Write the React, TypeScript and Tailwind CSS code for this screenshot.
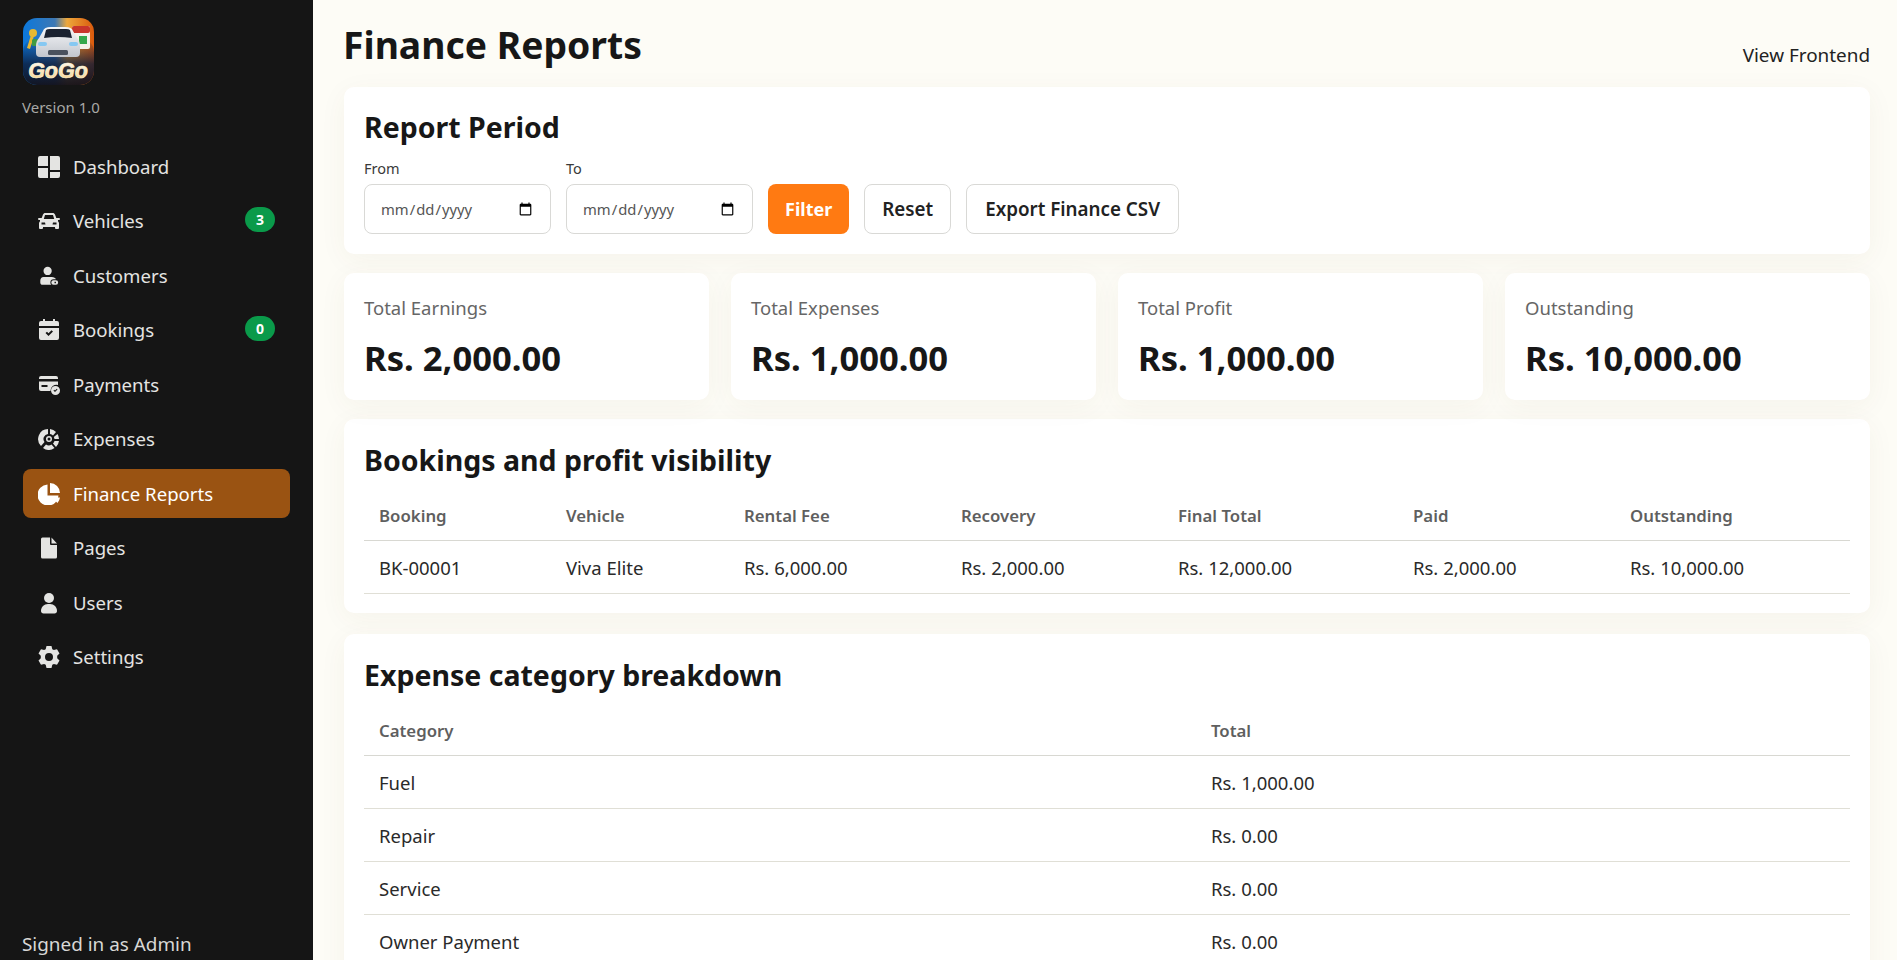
import React from "react";

const fontCls = "font-['Noto_Sans','Open_Sans',sans-serif]";

function Logo() {
  return (
    <svg width="72" height="68" viewBox="0 0 72 68" className="block">
      <defs>
        <linearGradient id="lg" x1="0" y1="0" x2="1" y2="0">
          <stop offset="0" stopColor="#0b78dc" />
          <stop offset="0.45" stopColor="#3d78b4" />
          <stop offset="0.62" stopColor="#eda83c" />
          <stop offset="1" stopColor="#d9590c" />
        </linearGradient>
        <linearGradient id="lb" x1="0" y1="0" x2="0" y2="1">
          <stop offset="0" stopColor="#0a1f4a" stopOpacity="0" />
          <stop offset="0.55" stopColor="#0b1a38" stopOpacity="0.8" />
          <stop offset="1" stopColor="#12101a" stopOpacity="0.95" />
        </linearGradient>
        <linearGradient id="lt" x1="0" y1="0" x2="0" y2="1">
          <stop offset="0" stopColor="#ffffff" />
          <stop offset="1" stopColor="#f6cf7c" />
        </linearGradient>
        <linearGradient id="lc" x1="0" y1="0" x2="0" y2="1">
          <stop offset="0" stopColor="#f6f7f9" />
          <stop offset="1" stopColor="#c2c6cd" />
        </linearGradient>
      </defs>
      <rect x="0" y="0" width="71" height="67" rx="14" fill="url(#lg)" />
      <rect x="0" y="20" width="71" height="47" rx="14" fill="url(#lb)" />
      <rect x="49" y="8" width="18" height="23" rx="2" fill="#f4f1ea" />
      <rect x="49" y="8" width="18" height="7" rx="2" fill="#c9352b" />
      <rect x="56" y="18" width="8" height="8" fill="#35a84c" />
      <circle cx="10" cy="15" r="4" fill="#e8b931" />
      <path d="M8 17 L4 30 L7 31 L11 18 Z" fill="#e8b931" />
      <rect x="9" y="21" width="6" height="7" rx="1.500" fill="#3f9b43" />
      <path d="M20 13 Q21 9 28 9 H42 Q49 9 50 13 L54 20 Q57 23 57 28 V35 Q57 39 53 39 H17 Q13 39 13 35 V28 Q13 23 16 20 Z" fill="url(#lc)" />
      <path d="M21 20 L23 12 Q24 11 27 11 H43 Q46 11 47 12 L49 20 Q35 18 21 20 Z" fill="#1a2230" />
      <rect x="15" y="24" width="9" height="4" rx="2" fill="#86c8f2" />
      <rect x="46" y="24" width="9" height="4" rx="2" fill="#86c8f2" />
      <rect x="25" y="32" width="20" height="5" rx="1.500" fill="#4a525e" />
      <text x="35" y="60" textAnchor="middle" fontFamily="'Liberation Sans',sans-serif" fontWeight="700" fontStyle="italic" fontSize="21.500" fill="url(#lt)" stroke="#fff3d6" strokeWidth="0.7">GoGo</text>
    </svg>
  );
}

const ic = "w-[22px] h-[22px] shrink-0";
const Dash = () => (
  <svg viewBox="0 0 22 22" className={ic} fill="currentColor"><path d="M0 2a2 2 0 0 1 2-2h8v10H0zM12 0h8a2 2 0 0 1 2 2v12H12zM12 16h10v4a2 2 0 0 1-2 2h-8zM0 12h10v10H2a2 2 0 0 1-2-2z" /></svg>
);
const Car = () => (
  <svg viewBox="0 0 22 22" className={ic} fill="currentColor"><path fillRule="evenodd" d="M5 4.500C5.400 3.600 6.200 3 7.200 3h7.600c1 0 1.800.6 2.200 1.500L18.300 8H21a1 1 0 0 1 0 2h-1v1.200c.6.5 1 1.200 1 2V18a1 1 0 0 1-1 1h-2a1 1 0 0 1-1-1v-1H5v1a1 1 0 0 1-1 1H2a1 1 0 0 1-1-1v-4.800c0-.8.4-1.500 1-2V10H1a1 1 0 0 1 0-2h2.700zM7 5l-1.200 4h10.400L15 5zM3.500 12.500v2h4l-.5-2zm15 0H15l-.5 2h4z" /></svg>
);
const Customer = () => (
  <svg viewBox="0 -1 24 24" className={ic} fill="currentColor"><path fillRule="evenodd" d="M10.500 1a4.500 4.500 0 1 1 0 9 4.500 4.500 0 0 1 0-9zM6 12h9c2.500 0 4 1 4.500 2.500H17a3.500 3.500 0 0 0-3.500 3.500c0 1 .4 2 1 2.500H5c-1.500 0-2.500-1-2.500-2.500V16c0-2.500 1.500-4 3.500-4zM17 15.500h2.500a2.500 2.500 0 0 1 0 5H17a2.500 2.500 0 0 1 0-5zm1 1.700v1.600h1.600v-1.600z" /></svg>
);
const Cal = () => (
  <svg viewBox="0 0 22 22" className={ic} fill="currentColor"><path fillRule="evenodd" d="M5 0h2v2h8V0h2v2h2a2 2 0 0 1 2 2v3H1V4a2 2 0 0 1 2-2h2zM1 9h20v10a2 2 0 0 1-2 2H3a2 2 0 0 1-2-2zm6.500 5L9 12.800l1.500 1.500 3-3L15 12.500 10.500 17z" /></svg>
);
const Pay = () => (
  <svg viewBox="0 0 22 22" className={ic} fill="currentColor"><path fillRule="evenodd" d="M3 2h15a2 2 0 0 1 2 2v1H1V4a2 2 0 0 1 2-2zM1 7.500h19V11a6 6 0 0 0-7.500 6H3a2 2 0 0 1-2-2zM3.500 11v2h6v-2zM17.500 12a4.500 4.500 0 1 1 0 9 4.500 4.500 0 0 1 0-9zm-2 4.500 1.500 1.500 2.500-2.500-.7-.7-1.800 1.800-.8-.8z" /></svg>
);
const Exp = () => (
  <svg viewBox="0 0 22 22" className={ic} fill="currentColor"><path fillRule="evenodd" d="M10 1v5a5 5 0 0 0-3.500 8L3 18A10 10 0 0 1 10 1zM12 1a10 10 0 0 1 6 3l-3 3.500A5 5 0 0 0 12 6zM19.500 6a10 10 0 0 1 1.500 5h-4.500a5 5 0 0 0-.7-2zM21 13a10 10 0 0 1-3 6l-3-3.500a5 5 0 0 0 1.500-2.500zM16.500 20a10 10 0 0 1-11.500 0l3-3.500a5 5 0 0 0 5.500 0zM11 8a3 3 0 1 1 0 6 3 3 0 0 1 0-6zm0 1.500a1.500 1.500 0 1 0 0 3 1.500 1.500 0 0 0 0-3z" /></svg>
);
const Pie = () => (
  <svg viewBox="0 0 22 22" className={ic} fill="currentColor"><path d="M9.500 1.500v11h11A10.500 10.500 0 1 1 9.500 1.500zM12 0a10 10 0 0 1 10 10H12zM13.500 14.500H22a10 10 0 0 1-2.500 5.500z" /></svg>
);
const Doc = () => (
  <svg viewBox="0 0 22 22" className={ic} fill="currentColor"><path d="M3 2a1.500 1.500 0 0 1 1.500-1.500H12V7a1 1 0 0 0 1 1h6v12a1.500 1.500 0 0 1-1.500 1.500h-13A1.500 1.500 0 0 1 3 20zM13.500.5 19 6.500h-5.500z" /></svg>
);
const User = () => (
  <svg viewBox="0 0 22 22" className={ic} fill="currentColor"><circle cx="11" cy="6" r="5" /><path d="M3 19c0-4 3-7 7-7h2c4 0 7 3 7 7 0 1.500-1 2.500-2.500 2.500h-11C4 21.500 3 20.500 3 19z" /></svg>
);
const Gear = () => (
  <svg viewBox="0 0 22 22" className={ic} fill="currentColor"><path fillRule="evenodd" d="M8.500 0h5l.8 3.200 1.600.9 3.100-.9L21.500 7.500l-2.300 2.300v2.400l2.300 2.300-2.500 4.300-3.100-.9-1.600.9-.8 3.200h-5l-.8-3.200-1.600-.9-3.100.9L.5 14.500l2.300-2.300V9.800L.5 7.500 3 3.200l3.100.9 1.600-.9zM11 7a4 4 0 1 0 0 8 4 4 0 0 0 0-8z" /></svg>
);

const nav: { label: string; icon: React.ReactNode; badge?: string; active?: boolean }[] = [
  { label: "Dashboard", icon: <Dash /> },
  { label: "Vehicles", icon: <Car />, badge: "3" },
  { label: "Customers", icon: <Customer /> },
  { label: "Bookings", icon: <Cal />, badge: "0" },
  { label: "Payments", icon: <Pay /> },
  { label: "Expenses", icon: <Exp /> },
  { label: "Finance Reports", icon: <Pie />, active: true },
  { label: "Pages", icon: <Doc /> },
  { label: "Users", icon: <User /> },
  { label: "Settings", icon: <Gear /> },
];

function Sidebar() {
  return (
    <aside className="w-[313px] shrink-0 h-full bg-[#151515] flex flex-col px-[23px] pt-[18px] pb-[4px] text-[#e4e4e2]">
      <Logo />
      <div className="text-[15px] leading-[20px] text-[#a9a9a6] mt-[11px] -ml-[1px]">Version 1.0</div>
      <nav className="mt-[25px] flex flex-col gap-[5.5px]">
        {nav.map((n) => (
          <div
            key={n.label}
            className={
              n.active
                ? "h-[49px] rounded-[8px] bg-[#9a5312] text-white flex items-center pl-[15px] pr-[15px] gap-[13px] text-[18.6px]"
                : "h-[49px] rounded-[8px] flex items-center pl-[15px] pr-[15px] gap-[13px] text-[18.6px]"
            }
          >
            {n.icon}
            <span className="flex-1">{n.label}</span>
            {n.badge && (
              <span className="w-[30px] h-[25px] -mt-[4px] rounded-full bg-[#0a9a4a] text-white text-[14px] font-bold flex items-center justify-center">
                {n.badge}
              </span>
            )}
          </div>
        ))}
      </nav>
      <div className="mt-auto text-[18.9px] leading-[24px] text-[#d8d8d6] -ml-[1px]">Signed in as Admin</div>
    </aside>
  );
}

const cardCls = "bg-white rounded-[10px] shadow-[0_6px_28px_rgba(90,80,40,0.05)]";

function DateField({ label }: { label: string }) {
  return (
    <label className="flex flex-col w-[187px]">
      <span className="text-[14.5px] leading-[20px] text-[#3a3a3a] mb-[6px]">{label}</span>
      <input
        type="date"
        className="h-[50px] w-full rounded-[8px] border border-[#d9d9d6] bg-white px-[15px] text-[14.8px] text-[#555]"
      />
    </label>
  );
}

function Stat({ label, value }: { label: string; value: string }) {
  return (
    <div className={`${cardCls} flex-1 h-[127px] px-[20px] pt-[23px]`}>
      <div className="text-[18.5px] leading-[24px] text-[#666]">{label}</div>
      <div className="text-[34.6px] leading-[44px] font-bold text-[#171717] mt-[16px]">{value}</div>
    </div>
  );
}

function Th({ children }: { children: React.ReactNode }) {
  return <th className="text-left font-semibold text-[#5f5f5f] text-[16.8px] px-[15px] pt-[3px] h-[51px] border-b border-[#d8d8d2]">{children}</th>;
}
function Td({ children }: { children: React.ReactNode }) {
  return <td className="text-[#2a2a2a] text-[18.5px] px-[15px] pt-[3px] h-[53px] border-b border-[#e0dfd6]">{children}</td>;
}

export default function App() {
  return (
    <div className={`${fontCls} h-screen w-full overflow-hidden flex bg-[#fdfcf6]`}>
      <Sidebar />
      <main className="flex-1 min-w-0 pl-[31px] pr-[27px]">
        <header className="flex items-end justify-between h-[87px] pb-[16px]">
          <h1 className="text-[37.3px] leading-[52px] font-bold text-[#171717] -ml-[1px]">Finance Reports</h1>
          <a className="text-[18.9px] leading-[24px] text-[#222] pb-[4px]">View Frontend</a>
        </header>

        <section className={`${cardCls} h-[167px] px-[20px] pt-[20px]`}>
          <h2 className="text-[28.5px] leading-[40px] font-bold text-[#171717]">Report Period</h2>
          <div className="flex items-end gap-[15px] mt-[11px]">
            <DateField label="From" />
            <DateField label="To" />
            <button className="h-[50px] px-[17px] rounded-[8px] bg-[#ff7a12] text-white font-bold text-[18px]">Filter</button>
            <button className="h-[50px] px-[17px] rounded-[8px] border border-[#d9d9d6] bg-white text-[#222] font-semibold text-[18.8px]">Reset</button>
            <button className="h-[50px] px-[18px] rounded-[8px] border border-[#d9d9d6] bg-white text-[#222] font-semibold text-[18.8px]">Export Finance CSV</button>
          </div>
        </section>

        <div className="flex gap-[22px] mt-[19px]">
          <Stat label="Total Earnings" value="Rs. 2,000.00" />
          <Stat label="Total Expenses" value="Rs. 1,000.00" />
          <Stat label="Total Profit" value="Rs. 1,000.00" />
          <Stat label="Outstanding" value="Rs. 10,000.00" />
        </div>

        <section className={`${cardCls} mt-[19px] h-[194px] px-[20px] pt-[21px]`}>
          <h2 className="text-[28.5px] leading-[40px] font-bold text-[#171717]">Bookings and profit visibility</h2>
          <table className="w-full mt-[9px] border-collapse table-fixed">
            <colgroup>
              <col className="w-[187px]" />
              <col className="w-[178px]" />
              <col className="w-[217px]" />
              <col className="w-[217px]" />
              <col className="w-[235px]" />
              <col className="w-[217px]" />
              <col />
            </colgroup>
            <thead>
              <tr>
                <Th>Booking</Th><Th>Vehicle</Th><Th>Rental Fee</Th><Th>Recovery</Th><Th>Final Total</Th><Th>Paid</Th><Th>Outstanding</Th>
              </tr>
            </thead>
            <tbody>
              <tr>
                <Td>BK-00001</Td><Td>Viva Elite</Td><Td>Rs. 6,000.00</Td><Td>Rs. 2,000.00</Td><Td>Rs. 12,000.00</Td><Td>Rs. 2,000.00</Td><Td>Rs. 10,000.00</Td>
              </tr>
            </tbody>
          </table>
        </section>

        <section className={`${cardCls} mt-[21px] px-[20px] pt-[21px] pb-[20px]`}>
          <h2 className="text-[28.5px] leading-[40px] font-bold text-[#171717]">Expense category breakdown</h2>
          <table className="w-full mt-[9px] border-collapse table-fixed">
            <colgroup>
              <col className="w-[832px]" />
              <col />
            </colgroup>
            <thead>
              <tr><Th>Category</Th><Th>Total</Th></tr>
            </thead>
            <tbody>
              {[["Fuel", "Rs. 1,000.00"], ["Repair", "Rs. 0.00"], ["Service", "Rs. 0.00"], ["Owner Payment", "Rs. 0.00"]].map(([a, b]) => (
                <tr key={a}><Td>{a}</Td><Td>{b}</Td></tr>
              ))}
            </tbody>
          </table>
        </section>
      </main>
    </div>
  );
}
